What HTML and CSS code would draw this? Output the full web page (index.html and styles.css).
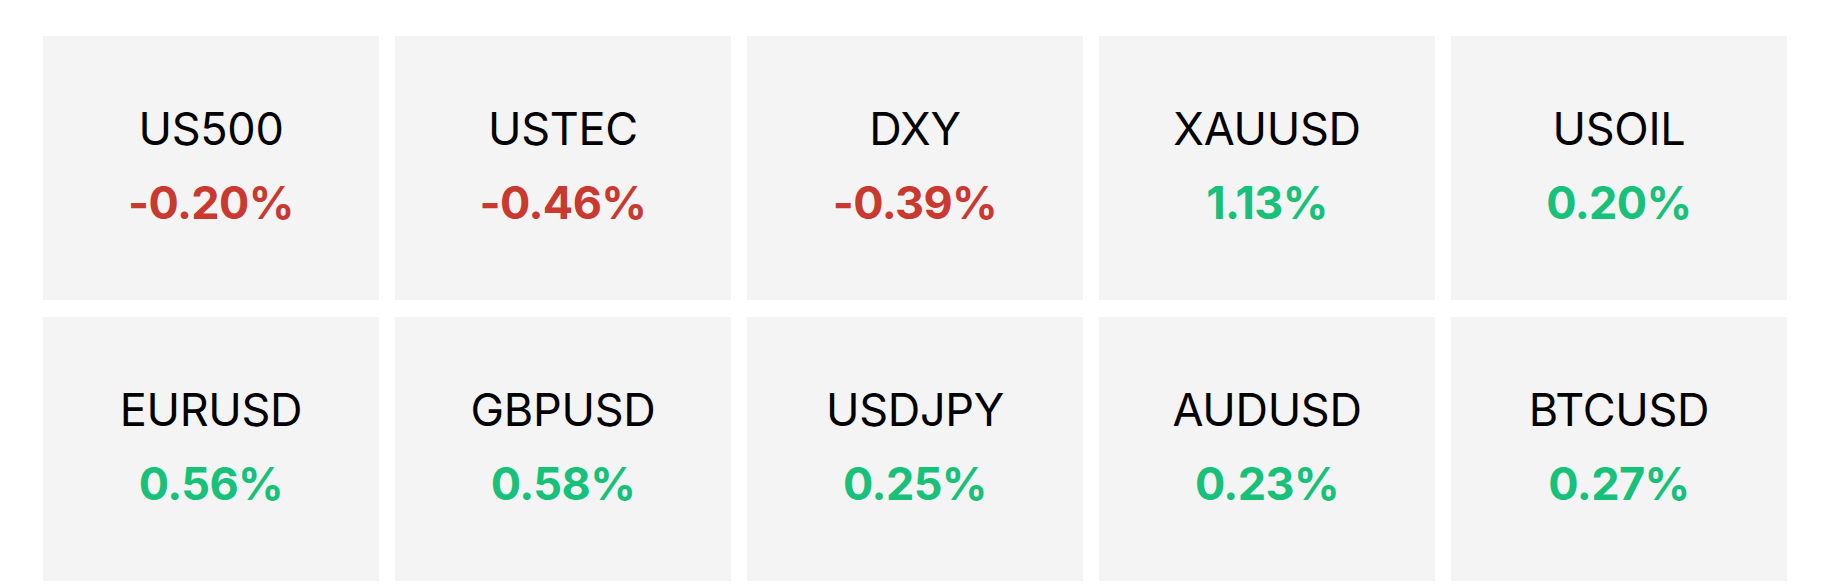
FILE: index.html
```html
<!DOCTYPE html>
<html lang="en">
<head>
  <meta charset="UTF-8" />
  <meta name="viewport" content="width=device-width, initial-scale=1.0"/>
  <title>Market Movers</title>
  <link rel="stylesheet" href="styles.css">
</head>
<body>
  <section class="market-board">
    <div class="ticker">
      <p class="symbol">US500</p>
      <p class="change down">-0.20%</p>
    </div>
    <div class="ticker">
      <p class="symbol">USTEC</p>
      <p class="change down">-0.46%</p>
    </div>
    <div class="ticker">
      <p class="symbol">DXY</p>
      <p class="change down">-0.39%</p>
    </div>
    <div class="ticker">
      <p class="symbol">XAUUSD</p>
      <p class="change up">1.13%</p>
    </div>
    <div class="ticker">
      <p class="symbol">USOIL</p>
      <p class="change up">0.20%</p>
    </div>
    <div class="ticker">
      <p class="symbol">EURUSD</p>
      <p class="change up">0.56%</p>
    </div>
    <div class="ticker">
      <p class="symbol">GBPUSD</p>
      <p class="change up">0.58%</p>
    </div>
    <div class="ticker">
      <p class="symbol">USDJPY</p>
      <p class="change up">0.25%</p>
    </div>
    <div class="ticker">
      <p class="symbol">AUDUSD</p>
      <p class="change up">0.23%</p>
    </div>
    <div class="ticker">
      <p class="symbol">BTCUSD</p>
      <p class="change up">0.27%</p>
    </div>
  </section>
</body>
</html>
```

FILE: styles.css
```css
:root {
  --card: #f4f4f4;
  --text: #000;
  --down: #c9392f;
  --up: #17c17a;
}

* {
  box-sizing: border-box;
  margin: 0;
  padding: 0;
}

body {
  font-family: Inter, 'Noto Sans', sans-serif;
  background: #fff;
  color: var(--text);
}

.market-board {
  display: grid;
  grid-template-columns: repeat(5, 1fr);
  grid-auto-rows: 264px;
  gap: 17px 16px;
  padding: 36px 40px 0 43px;
}

.ticker {
  background: var(--card);
  display: flex;
  flex-direction: column;
  align-items: center;
  justify-content: center;
  padding-bottom: 6px;
}

.symbol {
  font-size: 45px;
  font-weight: 400;
  line-height: 1;
  letter-spacing: -0.3px;
  margin-bottom: 29px;
}

.change {
  font-size: 45px;
  font-weight: 700;
  line-height: 1;
  letter-spacing: -0.6px;
}

.change.down {
  color: var(--down);
}

.change.up {
  color: var(--up);
}
```
